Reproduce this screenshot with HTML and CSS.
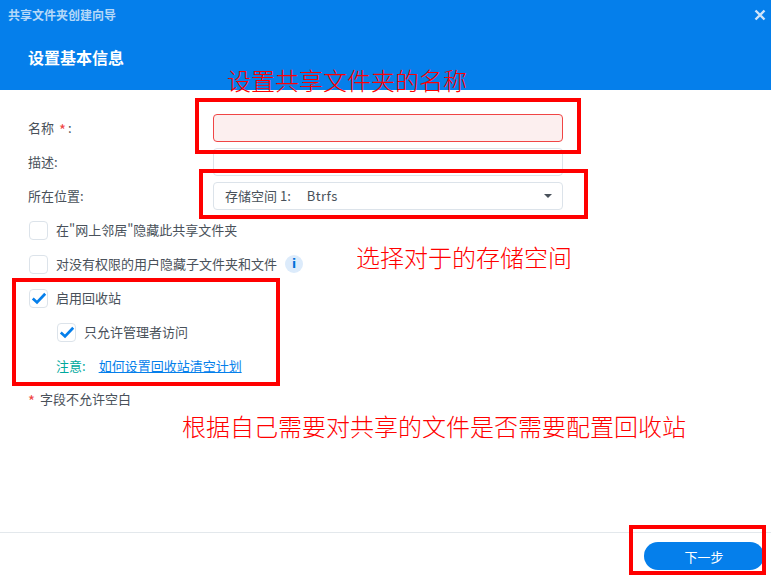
FILE: index.html
```html
<!DOCTYPE html>
<html lang="zh-CN">
<head>
    <meta charset="UTF-8">
    <title>共享文件夹创建向导</title>
    <link rel="stylesheet" href="styles.css">
</head>
<body>
    <div class="wizard">
        <!-- Header -->
        <div class="header">
            <div class="title-bar">
                <span class="title-text">共享文件夹创建向导</span>
                <svg class="close-icon" width="12" height="12" viewBox="0 0 12 12">
                    <path d="M1.5 1.5L10.5 10.5M10.5 1.5L1.5 10.5" stroke="#cfe4fa" stroke-width="2.4" fill="none"/>
                </svg>
            </div>
            <h1 class="step-title">设置基本信息</h1>
        </div>

        <!-- Form -->
        <div class="content">
            <div class="form-row">
                <label class="form-label">名称 <span class="required">*</span><span class="colon">:</span></label>
                <div class="text-input invalid"></div>
            </div>
            <div class="form-row">
                <label class="form-label">描述:</label>
                <div class="text-input"></div>
            </div>
            <div class="form-row">
                <label class="form-label">所在位置:</label>
                <div class="text-input select">
                    <span class="select-value">存储空间 1:<span class="fs-type">Btrfs</span></span>
                    <span class="select-arrow"></span>
                </div>
            </div>

            <div class="check-row">
                <span class="checkbox"></span>
                <span class="check-text">在"网上邻居"隐藏此共享文件夹</span>
            </div>
            <div class="check-row">
                <span class="checkbox"></span>
                <span class="check-text">对没有权限的用户隐藏子文件夹和文件</span>
                <span class="info-icon">i</span>
            </div>
            <div class="check-row">
                <span class="checkbox">
                    <svg width="16" height="16" viewBox="0 0 16 16"><path d="M1.8 8.5L6 12.4L14.2 3.8" stroke="#057feb" stroke-width="2.7" fill="none"/></svg>
                </span>
                <span class="check-text">启用回收站</span>
            </div>
            <div class="check-row nested">
                <span class="checkbox">
                    <svg width="16" height="16" viewBox="0 0 16 16"><path d="M1.8 8.5L6 12.4L14.2 3.8" stroke="#057feb" stroke-width="2.7" fill="none"/></svg>
                </span>
                <span class="check-text">只允许管理者访问</span>
            </div>
            <div class="note-row">
                <span class="note-label">注意:</span>
                <a class="note-link" href="#">如何设置回收站清空计划</a>
            </div>
            <div class="hint-row"><span class="required">*</span><span class="hint-text">字段不允许空白</span></div>
        </div>

        <!-- Footer -->
        <div class="footer">
            <button class="next-btn">下一步</button>
        </div>

        <!-- Annotations drawn over the screenshot -->
        <div class="mark mark-name"></div>
        <div class="mark mark-location"></div>
        <div class="mark mark-recycle"></div>
        <div class="mark mark-next"></div>
        <div class="note note-name">设置共享文件夹的名称</div>
        <div class="note note-location">选择对于的存储空间</div>
        <div class="note note-recycle">根据自己需要对共享的文件是否需要配置回收站</div>
    </div>
</body>
</html>
```

FILE: styles.css
```css
/* Global Styles */
html, body {
    margin: 0;
    padding: 0;
    background-color: #fff;
}

.wizard {
    position: relative;
    width: 771px;
    height: 578px;
    overflow: hidden;
    display: flex;
    flex-direction: column;
    font-family: "Noto Sans CJK SC", "Noto Sans", sans-serif;
    font-size: 13px;
    color: #49515a;
}

/* Header */
.header {
    height: 90px;
    background-color: #057feb;
    flex-shrink: 0;
}

.title-bar {
    height: 28px;
    padding: 0 5px 0 8px;
    display: flex;
    justify-content: space-between;
    align-items: center;
}

.title-text {
    font-size: 12px;
    font-weight: 700;
    color: #b4d8f8;
}

.close-icon {
    margin-top: 2px;
}

.step-title {
    margin: 13px 0 0 28px;
    font-size: 16px;
    line-height: 32px;
    font-weight: 700;
    color: #fff;
}

/* Form */
.content {
    flex-grow: 1;
    padding: 24px 0 0 28px;
}

.form-row {
    height: 28px;
    margin-bottom: 6px;
    display: flex;
    align-items: center;
}

.form-label {
    width: 185px;
    padding-bottom: 2px;
}

.colon {
    margin-left: 2px;
}

.text-input {
    box-sizing: border-box;
    width: 350px;
    height: 28px;
    border: 1px solid #dce3ea;
    border-radius: 4px;
}

.text-input.invalid {
    border-color: #f04545;
    background-color: #fcefef;
}

.text-input.select {
    padding: 0 10px 0 11px;
    display: flex;
    justify-content: space-between;
    align-items: center;
}

.select-value {
    padding-bottom: 2px;
}

.fs-type {
    margin-left: 16px;
    letter-spacing: 0.5px;
}

.select-arrow {
    width: 0;
    height: 0;
    border-left: 4px solid transparent;
    border-right: 4px solid transparent;
    border-top: 4px solid #49515a;
}

.required {
    color: #f04545;
    font-size: 15px;
    line-height: 13px;
    margin-left: 2px;
    vertical-align: -3px;
}

.check-row {
    height: 28px;
    margin-bottom: 6px;
    display: flex;
    align-items: center;
    gap: 8px;
}

.check-row.nested {
    margin-left: 28px;
}

.check-text {
    padding-bottom: 2px;
}

.checkbox {
    box-sizing: border-box;
    width: 19px;
    height: 19px;
    margin-left: 1px;
    border: 1px solid #dce3ea;
    border-radius: 4px;
    display: flex;
    align-items: center;
    justify-content: center;
}

.info-icon {
    width: 18px;
    height: 18px;
    border-radius: 50%;
    background-color: #dcebfb;
    color: #0070d8;
    font-family: "DejaVu Sans", sans-serif;
    font-size: 12px;
    font-weight: 700;
    line-height: 18px;
    text-align: center;
}

.note-row {
    height: 28px;
    margin: 0 0 6px 28px;
    display: flex;
    align-items: center;
    gap: 13px;
}

.note-label, .note-link {
    margin-bottom: 2px;
}

.note-label {
    color: #00a99d;
}

.note-link {
    color: #057feb;
}

.hint-row {
    height: 28px;
    line-height: 26px;
}

.hint-row .required {
    margin-left: 0;
}

.hint-text {
    margin-left: 5px;
}

/* Footer */
.footer {
    box-sizing: border-box;
    height: 46px;
    flex-shrink: 0;
    border-top: 1px solid #e3e8ec;
    padding: 9px 7px 0 0;
    display: flex;
    justify-content: flex-end;
    align-items: flex-start;
}

.next-btn {
    width: 120px;
    height: 28px;
    border: none;
    border-radius: 14px;
    background-color: #057feb;
    color: #fff;
    font-family: inherit;
    font-size: 13px;
    padding: 0;
}

/* Annotations */
.mark {
    position: absolute;
    box-sizing: border-box;
    border: 4px solid #f00;
}

.mark-name {
    left: 195px;
    top: 98px;
    width: 386px;
    height: 56px;
}

.mark-location {
    left: 199px;
    top: 169px;
    width: 389px;
    height: 50px;
}

.mark-recycle {
    left: 12px;
    top: 278px;
    width: 268px;
    height: 108px;
}

.mark-next {
    left: 629px;
    top: 525px;
    width: 137px;
    height: 50px;
}

.note {
    position: absolute;
    color: #f00;
    font-size: 24px;
    line-height: 32px;
    font-weight: 300;
    white-space: nowrap;
}

.note-name {
    left: 227px;
    top: 64px;
}

.note-location {
    left: 356px;
    top: 241px;
}

.note-recycle {
    left: 182px;
    top: 410px;
}
```
